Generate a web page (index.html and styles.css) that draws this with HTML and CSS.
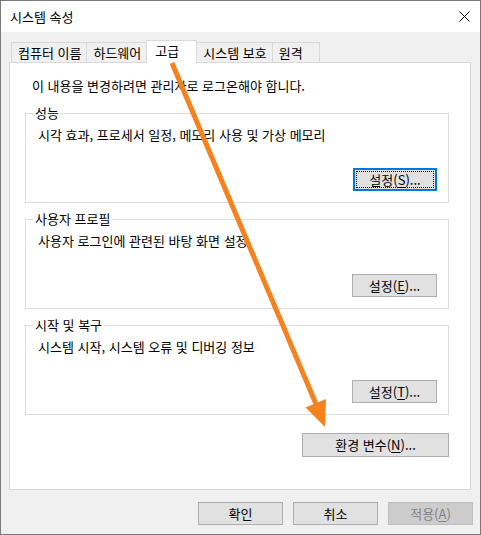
FILE: index.html
```html
<!DOCTYPE html>
<html lang="ko">
<head>
    <meta charset="UTF-8">
    <title>시스템 속성</title>
    <link rel="stylesheet" href="styles.css">
</head>
<body>

<div class="window">
    <div class="titlebar">
        <span class="title">시스템 속성</span>
        <span class="close">
            <svg width="11" height="11" viewBox="0 0 11 11">
                <path d="M0.5 0.5 L10.5 10.5 M10.5 0.5 L0.5 10.5" stroke="#000" stroke-width="1" fill="none"/>
            </svg>
        </span>
    </div>

    <div class="dialog">
        <!-- tab strip -->
        <div class="tabs">
            <div class="tab">컴퓨터 이름</div>
            <div class="tab">하드웨어</div>
            <div class="tab active">고급</div>
            <div class="tab">시스템 보호</div>
            <div class="tab">원격</div>
        </div>

        <div class="panel">
            <p class="note">이 내용을 변경하려면 관리자로 로그온해야 합니다.</p>

            <fieldset class="group">
                <legend>성능</legend>
                <p class="group-text">시각 효과, 프로세서 일정, 메모리 사용 및 가상 메모리</p>
                <div class="group-actions">
                    <button class="btn focused">설정(<u>S</u>)...</button>
                </div>
            </fieldset>

            <fieldset class="group">
                <legend>사용자 프로필</legend>
                <p class="group-text">사용자 로그인에 관련된 바탕 화면 설정</p>
                <div class="group-actions">
                    <button class="btn">설정(<u>E</u>)...</button>
                </div>
            </fieldset>

            <fieldset class="group">
                <legend>시작 및 복구</legend>
                <p class="group-text">시스템 시작, 시스템 오류 및 디버깅 정보</p>
                <div class="group-actions">
                    <button class="btn">설정(<u>T</u>)...</button>
                </div>
            </fieldset>

            <div class="env-row">
                <button class="btn btn-env">환경 변수(<u>N</u>)...</button>
            </div>
        </div>

        <div class="actions">
            <button class="btn">확인</button>
            <button class="btn">취소</button>
            <button class="btn disabled">적용(<u>A</u>)</button>
        </div>
    </div>

    <!-- annotation arrow drawn over the dialog -->
    <svg class="arrow" width="481" height="535" viewBox="0 0 481 535">
        <line x1="172" y1="63" x2="316" y2="404" stroke="#f5821f" stroke-width="5"/>
        <polygon points="325,427 305.5,407.5 326,399" fill="#f5821f"/>
    </svg>
</div>

</body>
</html>
```

FILE: styles.css
```css
body {
    margin: 0;
    padding: 0;
    font-family: "Noto Sans CJK KR", "Noto Sans", sans-serif;
    font-size: 13px;
    line-height: 16px;
    color: #000;
    background: #fff;
}

.window {
    position: relative;
    width: 481px;
    height: 535px;
    box-sizing: border-box;
    border: 1px solid #7a7a7a;
    background-color: #f0f0f0;
    display: flex;
    flex-direction: column;
}

.titlebar {
    height: 31px;
    background-color: #fff;
    display: flex;
    align-items: center;
    justify-content: space-between;
    padding-left: 9px;
}

.close {
    display: flex;
    margin-right: 10px;
}

.dialog {
    flex: 1;
    padding: 8px 0 0 8px;
}

/* tabs */
.tabs {
    display: flex;
    align-items: flex-end;
    margin-left: 2px;
    height: 22px;
}

.tab {
    position: relative;
    height: 20px;
    line-height: 20px;
    min-width: 47px;
    box-sizing: border-box;
    padding: 0 5px 0 6px;
    border: 1px solid #d9d9d9;
    border-bottom: none;
    border-left: none;
    background-color: #f0f0f0;
    white-space: nowrap;
}

.tab:first-child {
    border-left: 1px solid #d9d9d9;
}

.tab.active {
    z-index: 2;
    height: 23px;
    line-height: 20px;
    margin: 0 0 -1px -1px;
    padding-left: 8px;
    min-width: 51px;
    border-left: 1px solid #d9d9d9;
    background-color: #fff;
}

.panel {
    position: relative;
    z-index: 1;
    width: 462px;
    height: 428px;
    box-sizing: border-box;
    border: 1px solid #d9d9d9;
    background-color: #fff;
    padding: 15px 21px 0 15px;
}

.note {
    margin: 0 0 0 7px;
}

.group {
    margin: 11px 0 0 0;
    padding: 6px 11px 11px 0;
    border: 1px solid #dcdcdc;
    min-inline-size: 0;
}

.group + .group {
    margin-top: 8px;
}

.group legend {
    margin-left: 7px;
    padding: 0 2px;
    line-height: 16px;
}

.group-text {
    margin: 0;
    padding-left: 12px;
}

.group-actions {
    display: flex;
    justify-content: flex-end;
    margin-top: 25px;
}

.env-row {
    display: flex;
    justify-content: flex-end;
    margin-top: 18px;
}

/* buttons */
.btn {
    width: 85px;
    height: 23px;
    padding: 0;
    font-family: inherit;
    font-size: 13px;
    line-height: 16px;
    color: #000;
    background-color: #e1e1e1;
    border: 1px solid #adadad;
    border-radius: 0;
}

.btn u {
    text-underline-offset: 2px;
}

.btn.focused {
    width: 84px;
    border-color: #0078d7;
    box-shadow: inset 0 0 0 1px #0078d7;
    outline: 1px dotted #000;
    outline-offset: -4px;
}

.btn-env {
    width: 147px;
    height: 24px;
}

.btn.disabled {
    color: #838383;
    background-color: #cccccc;
    border-color: #bfbfbf;
}

.actions {
    display: flex;
    justify-content: flex-end;
    gap: 10px;
    margin-top: 12px;
    padding-right: 7px;
}

.arrow {
    position: absolute;
    left: -1px;
    top: -1px;
    z-index: 5;
    pointer-events: none;
}
```
